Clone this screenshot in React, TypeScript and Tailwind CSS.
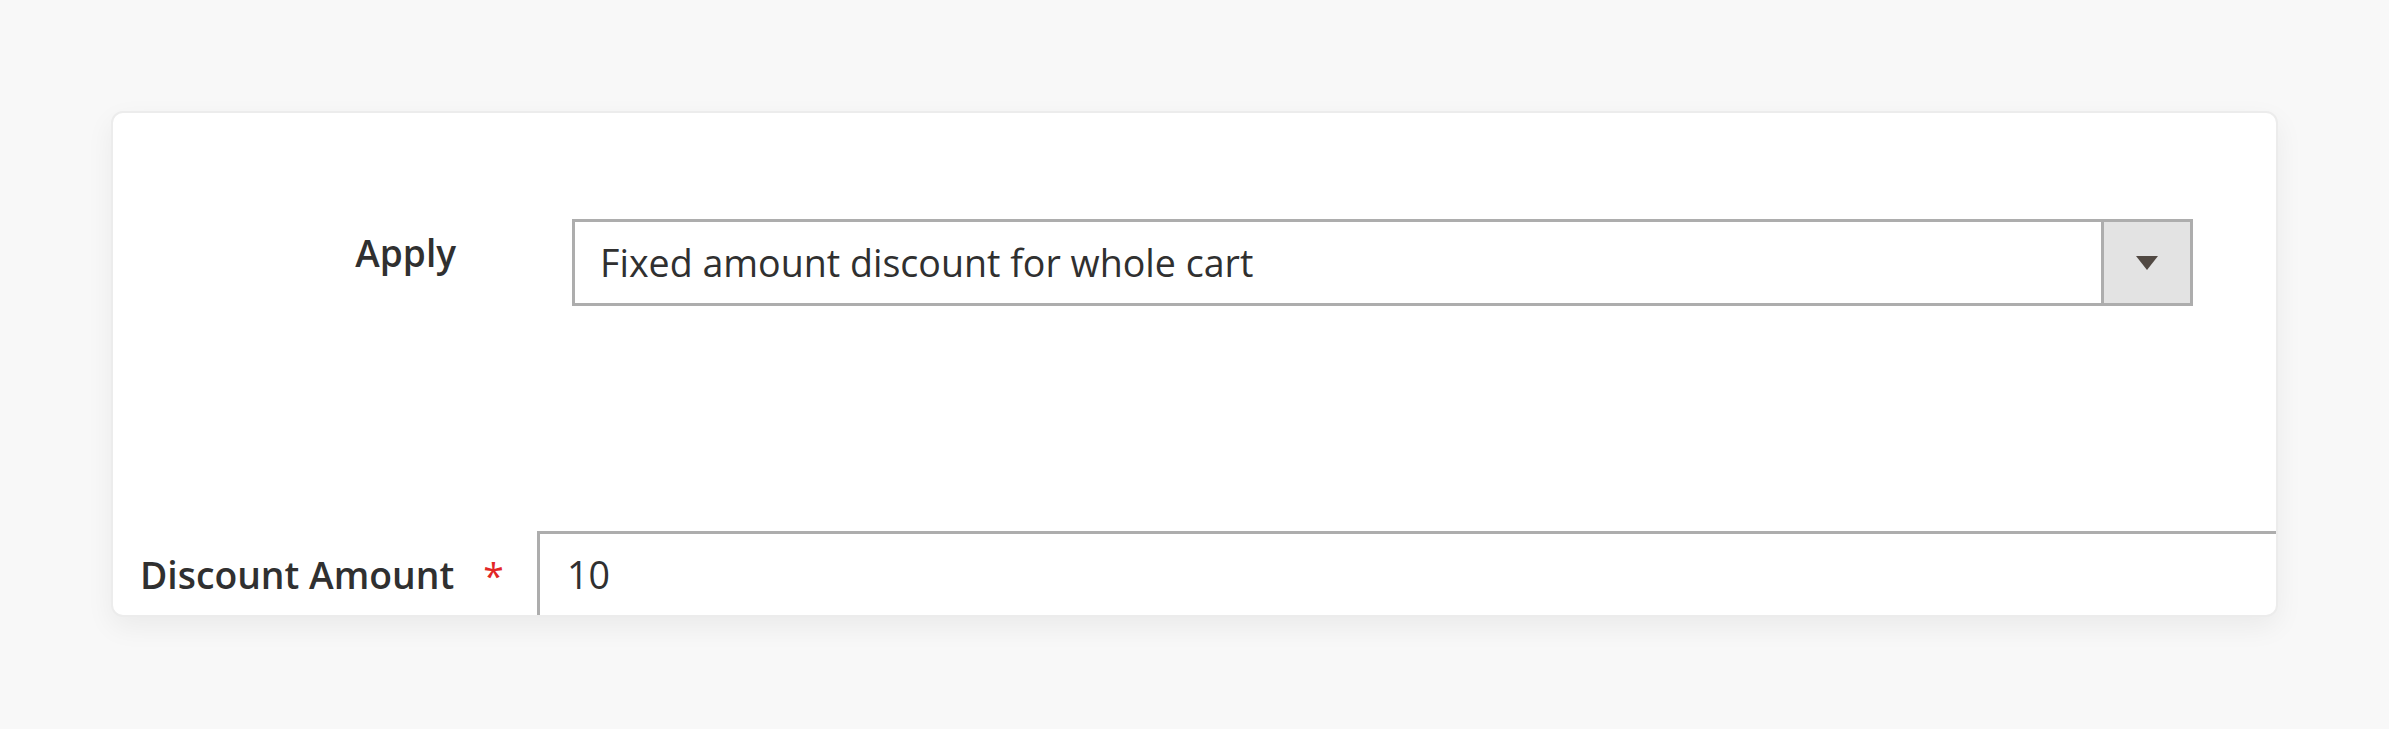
import React from "react";

export default function App() {
  return (
    <div
      className="w-full min-h-[729px] bg-[#f8f8f8] px-[111px] pt-[111px]"
      style={{ fontFamily: '"Open Sans", "Noto Sans", sans-serif' }}
    >
      <div className="h-[506px] rounded-[12px] bg-white border-2 border-[#ececec] shadow-[0_10px_28px_rgba(0,0,0,0.06)] overflow-hidden flex flex-col">
        {/* Row 1: Apply */}
        <div className="flex items-start mt-[106px]">
          <div className="w-[343px] shrink-0 text-right pt-[9px] text-[37px] leading-[50px] font-semibold text-[#303030]">
            Apply
          </div>
          <div className="ml-[116px] w-[1621px] h-[87px] shrink-0 border-[3px] border-[#adadad] flex items-stretch">
            <div className="flex-1 flex items-center pl-[25px] text-[37.6px] text-[#303030] leading-none">
              Fixed amount discount for whole cart
            </div>
            <div className="w-[89px] shrink-0 bg-[#e3e3e3] border-l-[3px] border-[#adadad] flex items-center justify-center">
              <svg width="22" height="14" viewBox="0 0 22 14">
                <polygon points="0,0 22,0 11,14" fill="#514943" />
              </svg>
            </div>
          </div>
        </div>

        {/* Row 2: Discount Amount */}
        <div className="flex items-center mt-[225px]">
          <div className="w-[424px] shrink-0 pl-[27px] flex items-center text-[37.3px] font-semibold text-[#303030] leading-none">
            <span>Discount Amount</span>
            <span className="ml-[29px] text-[#e22626] font-normal">*</span>
          </div>
          <div className="w-[1900px] shrink-0 h-[87px] border-[3px] border-[#adadad] flex items-center pl-[27px] text-[37.6px] text-[#303030] leading-none">
            10
          </div>
        </div>
      </div>
    </div>
  );
}
